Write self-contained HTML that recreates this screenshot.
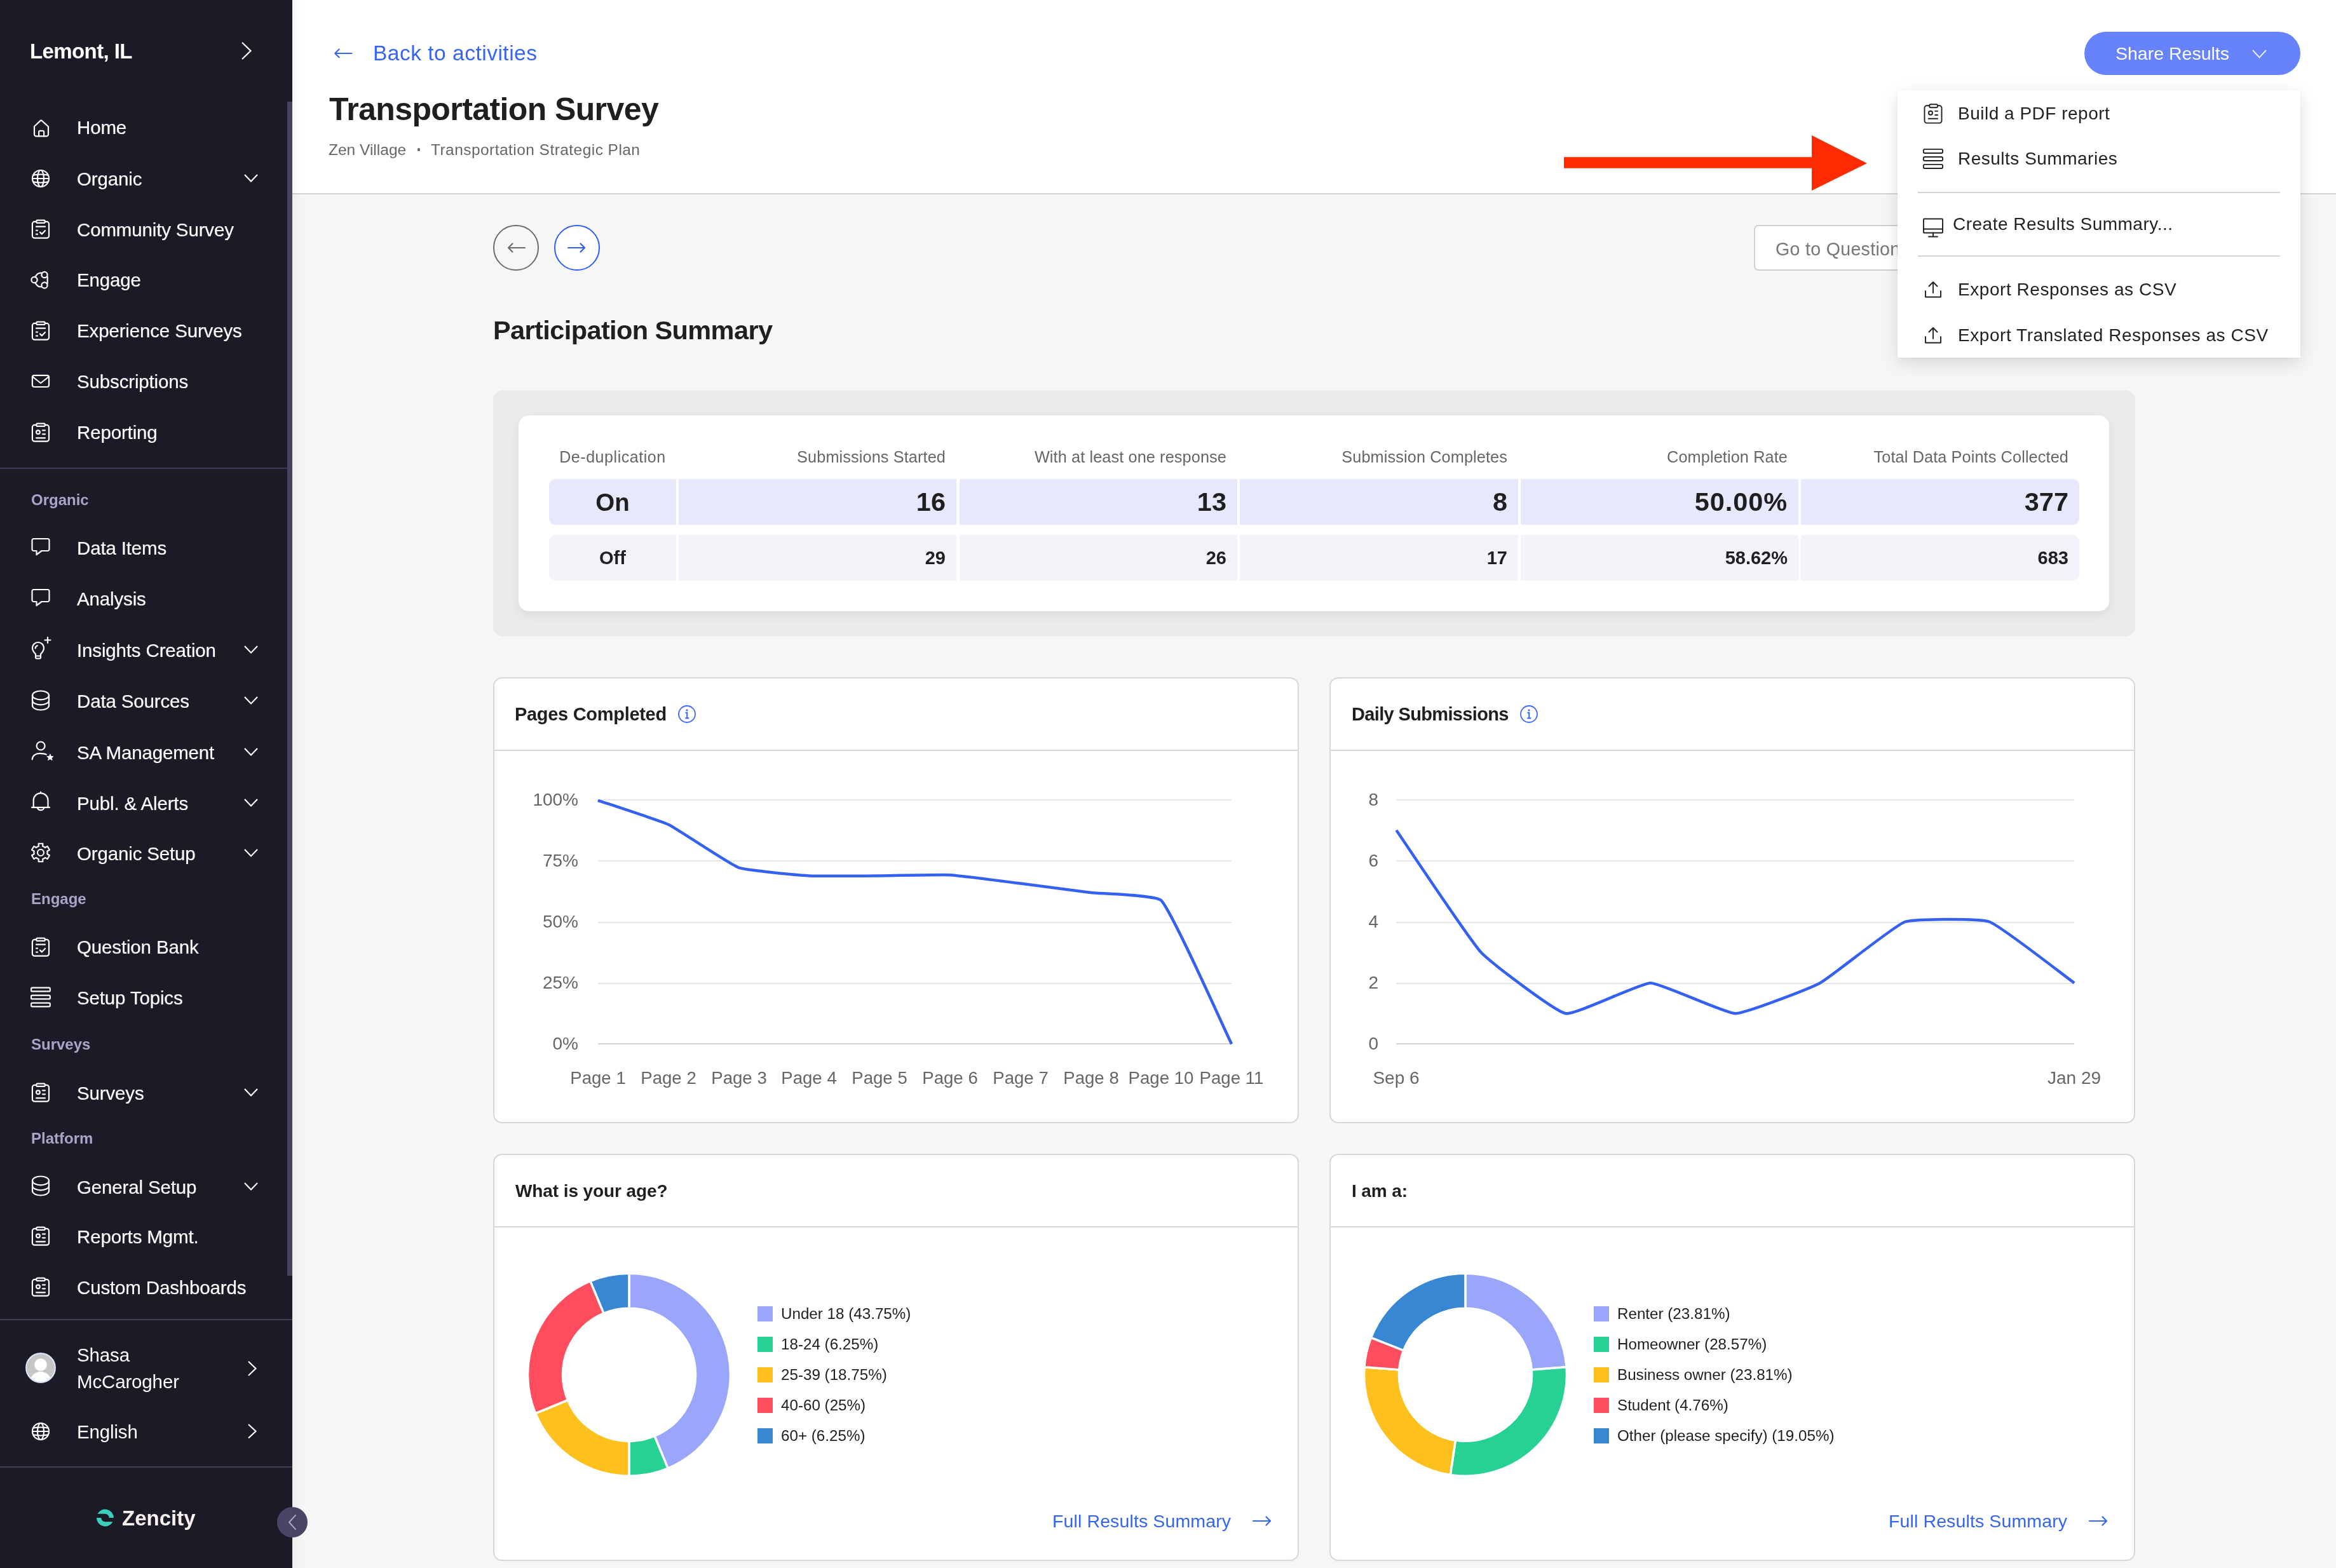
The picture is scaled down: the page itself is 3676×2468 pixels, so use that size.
<!DOCTYPE html><html><head><meta charset="utf-8"><style>
html,body{margin:0;padding:0;}
body{width:3676px;height:2468px;overflow:hidden;position:relative;background:#f6f6f6;font-family:'Liberation Sans',sans-serif;}
.t{position:absolute;white-space:nowrap;font-family:'Liberation Sans',sans-serif;will-change:transform;}
</style></head><body>
<div style="position:absolute;left:0.0px;top:0.0px;width:460.0px;height:2468.0px;background:#1b1a27;"></div>
<div style="position:absolute;left:452.0px;top:160.0px;width:8.0px;height:1848.0px;background:#47425f;"></div>
<div style="position:absolute;left:0.0px;top:735.5px;width:452.0px;height:2.5px;background:#3e3a57;"></div>
<div style="position:absolute;left:0.0px;top:2075.5px;width:460.0px;height:2.5px;background:#3e3a57;"></div>
<div style="position:absolute;left:0.0px;top:2307.5px;width:460.0px;height:2.5px;background:#3e3a57;"></div>
<div class="t" style="left:47.3px;top:63.9px;font-size:33px;line-height:33px;font-weight:700;color:#fff;letter-spacing:-0.6px;">Lemont, IL</div>
<svg style="position:absolute;left:378.2px;top:64.0px;overflow:visible" width="19.5" height="32" viewBox="0 0 19.5 32"><polyline points="3,3 16.5,16.0 3,29" fill="none" stroke="#ffffff" stroke-width="2.2" stroke-linecap="butt" stroke-linejoin="miter"/></svg>
<svg style="position:absolute;left:48.0px;top:184.5px;overflow:visible" width="32" height="32" viewBox="0 0 32 32"><path d="M6 14 L15.4 5.1 Q16.7 3.9 18 5.1 L28 14.2 V26.4 A3 3 0 0 1 25 29.4 H9 A3 3 0 0 1 6 26.4 Z" fill="none" stroke="#fff" stroke-width="2.2" stroke-linecap="round" stroke-linejoin="round"/><path d="M13.1 29.4 V22.6 A1.8 1.8 0 0 1 14.9 20.8 H19.3 A1.8 1.8 0 0 1 21.1 22.6 V29.4" fill="none" stroke="#fff" stroke-width="2.2" stroke-linecap="round" stroke-linejoin="round"/></svg>
<div class="t" style="left:121.0px;top:186.2px;font-size:29.5px;line-height:29.5px;font-weight:400;color:#fff;letter-spacing:-0.15px;-webkit-text-stroke:0.2px #fff;">Home</div>
<svg style="position:absolute;left:48.0px;top:265.0px;overflow:visible" width="32" height="32" viewBox="0 0 32 32"><circle cx="16" cy="16" r="13" fill="none" stroke="#fff" stroke-width="2.2" stroke-linecap="round" stroke-linejoin="round"/><ellipse cx="16" cy="16" rx="5" ry="13" fill="none" stroke="#fff" stroke-width="2.2" stroke-linecap="round" stroke-linejoin="round"/><path d="M3 16 H29 M4.6 10.6 Q16 8.4 27.4 10.6 M4.6 21.4 Q16 23.6 27.4 21.4" fill="none" stroke="#fff" stroke-width="2.2" stroke-linecap="round" stroke-linejoin="round"/></svg>
<div class="t" style="left:121.0px;top:266.7px;font-size:29.5px;line-height:29.5px;font-weight:400;color:#fff;letter-spacing:-0.15px;-webkit-text-stroke:0.2px #fff;">Organic</div>
<svg style="position:absolute;left:382.2px;top:271.9px;overflow:visible" width="26" height="16.5" viewBox="0 0 26 16.5"><polyline points="3,3 13.0,13.5 23,3" fill="none" stroke="#ffffff" stroke-width="2.2" stroke-linecap="butt" stroke-linejoin="miter"/></svg>
<svg style="position:absolute;left:48.0px;top:345.3px;overflow:visible" width="32" height="32" viewBox="0 0 32 32"><rect x="2.9" y="3.9" width="26.1" height="25.8" rx="3.5" fill="none" stroke="#fff" stroke-width="2.2" stroke-linecap="round" stroke-linejoin="round"/><rect x="9.2" y="1.6" width="13.6" height="4.3" rx="2" fill="#1b1a27" stroke="#fff" stroke-width="2.2"/><path d="M9 11.7 H23 M9 17.7 H11 M9 23.7 H11 M15 20.6 L17.8 23.4 L23 18" fill="none" stroke="#fff" stroke-width="2.2" stroke-linecap="round" stroke-linejoin="round"/></svg>
<div class="t" style="left:121.0px;top:347.0px;font-size:29.5px;line-height:29.5px;font-weight:400;color:#fff;letter-spacing:-0.15px;-webkit-text-stroke:0.2px #fff;">Community Survey</div>
<svg style="position:absolute;left:48.0px;top:424.5px;overflow:visible" width="32" height="32" viewBox="0 0 32 32"><circle cx="6" cy="15.5" r="4.6" fill="none" stroke="#fff" stroke-width="2.2" stroke-linecap="round" stroke-linejoin="round"/><circle cx="22" cy="7.5" r="4.6" fill="none" stroke="#fff" stroke-width="2.2" stroke-linecap="round" stroke-linejoin="round"/><circle cx="22" cy="24" r="4.6" fill="none" stroke="#fff" stroke-width="2.2" stroke-linecap="round" stroke-linejoin="round"/><path d="M7.5 11.2 C9.5 6.5 13 4 17.6 4.6 M7.5 19.8 C9.5 24.5 13 27 17.6 26.4 M26.7 10.5 V21" fill="none" stroke="#fff" stroke-width="2.2" stroke-linecap="round" stroke-linejoin="round"/></svg>
<div class="t" style="left:121.0px;top:426.2px;font-size:29.5px;line-height:29.5px;font-weight:400;color:#fff;letter-spacing:-0.15px;-webkit-text-stroke:0.2px #fff;">Engage</div>
<svg style="position:absolute;left:48.0px;top:504.5px;overflow:visible" width="32" height="32" viewBox="0 0 32 32"><rect x="2.9" y="3.9" width="26.1" height="25.8" rx="3.5" fill="none" stroke="#fff" stroke-width="2.2" stroke-linecap="round" stroke-linejoin="round"/><rect x="9.2" y="1.6" width="13.6" height="4.3" rx="2" fill="#1b1a27" stroke="#fff" stroke-width="2.2"/><path d="M9 11.7 H23 M9 17.7 H11 M9 23.7 H11 M15 20.6 L17.8 23.4 L23 18" fill="none" stroke="#fff" stroke-width="2.2" stroke-linecap="round" stroke-linejoin="round"/></svg>
<div class="t" style="left:121.0px;top:506.2px;font-size:29.5px;line-height:29.5px;font-weight:400;color:#fff;letter-spacing:-0.15px;-webkit-text-stroke:0.2px #fff;">Experience Surveys</div>
<svg style="position:absolute;left:48.0px;top:584.2px;overflow:visible" width="32" height="32" viewBox="0 0 32 32"><rect x="2.9" y="6.8" width="26.1" height="18.2" rx="3" fill="none" stroke="#fff" stroke-width="2.2" stroke-linecap="round" stroke-linejoin="round"/><path d="M4 9.5 L16 19 L28 9.5" fill="none" stroke="#fff" stroke-width="2.2" stroke-linecap="round" stroke-linejoin="round"/></svg>
<div class="t" style="left:121.0px;top:585.9px;font-size:29.5px;line-height:29.5px;font-weight:400;color:#fff;letter-spacing:-0.15px;-webkit-text-stroke:0.2px #fff;">Subscriptions</div>
<svg style="position:absolute;left:48.0px;top:664.5px;overflow:visible" width="32" height="32" viewBox="0 0 32 32"><rect x="2.9" y="3.9" width="26.1" height="25.8" rx="3.5" fill="none" stroke="#fff" stroke-width="2.2" stroke-linecap="round" stroke-linejoin="round"/><rect x="9.2" y="1.6" width="13.6" height="4.3" rx="2" fill="#1b1a27" stroke="#fff" stroke-width="2.2"/><circle cx="11.9" cy="15.2" r="2.9" fill="none" stroke="#fff" stroke-width="2.2" stroke-linecap="round" stroke-linejoin="round"/><path d="M18.9 12.3 H23 M18.9 18.3 H23 M9 24.3 H23" fill="none" stroke="#fff" stroke-width="2.2" stroke-linecap="round" stroke-linejoin="round"/></svg>
<div class="t" style="left:121.0px;top:666.2px;font-size:29.5px;line-height:29.5px;font-weight:400;color:#fff;letter-spacing:-0.15px;-webkit-text-stroke:0.2px #fff;">Reporting</div>
<svg style="position:absolute;left:48.0px;top:846.3px;overflow:visible" width="32" height="32" viewBox="0 0 32 32"><path d="M5 2 H27 A2.5 2.5 0 0 1 29.5 4.5 V18.5 A2.5 2.5 0 0 1 27 21 H17.5 L9.5 27 V21 H5 A2.5 2.5 0 0 1 2.5 18.5 V4.5 A2.5 2.5 0 0 1 5 2 Z" fill="none" stroke="#fff" stroke-width="2.2" stroke-linecap="round" stroke-linejoin="round"/></svg>
<div class="t" style="left:121.0px;top:848.0px;font-size:29.5px;line-height:29.5px;font-weight:400;color:#fff;letter-spacing:-0.15px;-webkit-text-stroke:0.2px #fff;">Data Items</div>
<svg style="position:absolute;left:48.0px;top:925.8px;overflow:visible" width="32" height="32" viewBox="0 0 32 32"><path d="M5 2 H27 A2.5 2.5 0 0 1 29.5 4.5 V18.5 A2.5 2.5 0 0 1 27 21 H17.5 L9.5 27 V21 H5 A2.5 2.5 0 0 1 2.5 18.5 V4.5 A2.5 2.5 0 0 1 5 2 Z" fill="none" stroke="#fff" stroke-width="2.2" stroke-linecap="round" stroke-linejoin="round"/></svg>
<div class="t" style="left:121.0px;top:927.5px;font-size:29.5px;line-height:29.5px;font-weight:400;color:#fff;letter-spacing:-0.15px;-webkit-text-stroke:0.2px #fff;">Analysis</div>
<svg style="position:absolute;left:48.0px;top:1007.5px;overflow:visible" width="32" height="32" viewBox="0 0 32 32"><path d="M8 21.5 C5.5 19 3 16.5 3 12 A9 9 0 0 1 21 12 C21 16.5 18.5 19 16 21.5 V26.5 A2 2 0 0 1 14 28.5 H10 A2 2 0 0 1 8 26.5 Z M8 24.5 H16" fill="none" stroke="#fff" stroke-width="2.2" stroke-linecap="round" stroke-linejoin="round"/><path d="M7.6 12.5 A4.6 4.6 0 0 1 10.8 8.2" fill="none" stroke="#fff" stroke-width="2.2" stroke-linecap="round" stroke-linejoin="round"/><path d="M27 -5 V4 M22.5 -0.5 H31.5" fill="none" stroke="#fff" stroke-width="2.2" stroke-linecap="round" stroke-linejoin="round"/></svg>
<div class="t" style="left:121.0px;top:1009.2px;font-size:29.5px;line-height:29.5px;font-weight:400;color:#fff;letter-spacing:-0.15px;-webkit-text-stroke:0.2px #fff;">Insights Creation</div>
<svg style="position:absolute;left:382.2px;top:1014.4px;overflow:visible" width="26" height="16.5" viewBox="0 0 26 16.5"><polyline points="3,3 13.0,13.5 23,3" fill="none" stroke="#ffffff" stroke-width="2.2" stroke-linecap="butt" stroke-linejoin="miter"/></svg>
<svg style="position:absolute;left:48.0px;top:1087.5px;overflow:visible" width="32" height="32" viewBox="0 0 32 32"><ellipse cx="16" cy="6.4" rx="13" ry="6.9" fill="none" stroke="#fff" stroke-width="2.2" stroke-linecap="round" stroke-linejoin="round"/><path d="M3 6.4 V22.6 A13 6.9 0 0 0 29 22.6 V6.4 M3 14.4 A13 6.9 0 0 0 29 14.4" fill="none" stroke="#fff" stroke-width="2.2" stroke-linecap="round" stroke-linejoin="round"/></svg>
<div class="t" style="left:121.0px;top:1089.2px;font-size:29.5px;line-height:29.5px;font-weight:400;color:#fff;letter-spacing:-0.15px;-webkit-text-stroke:0.2px #fff;">Data Sources</div>
<svg style="position:absolute;left:382.2px;top:1094.4px;overflow:visible" width="26" height="16.5" viewBox="0 0 26 16.5"><polyline points="3,3 13.0,13.5 23,3" fill="none" stroke="#ffffff" stroke-width="2.2" stroke-linecap="butt" stroke-linejoin="miter"/></svg>
<svg style="position:absolute;left:48.0px;top:1168.1px;overflow:visible" width="32" height="32" viewBox="0 0 32 32"><circle cx="16.1" cy="6" r="6.5" fill="none" stroke="#fff" stroke-width="2.2" stroke-linecap="round" stroke-linejoin="round"/><path d="M2.7 27.4 C3 21.5 8 17.8 14.5 17.8 C19 17.8 22.5 18.3 24.8 19.6" fill="none" stroke="#fff" stroke-width="2.2" stroke-linecap="round" stroke-linejoin="round"/><path d="M30.9 18.8 L32.4 22.3 L36 22.6 L33.3 25 L34.1 28.6 L30.9 26.7 L27.7 28.6 L28.5 25 L25.8 22.6 L29.4 22.3 Z" fill="#fff" stroke="#fff" stroke-width="0.8" stroke-linejoin="round"/></svg>
<div class="t" style="left:121.0px;top:1169.8px;font-size:29.5px;line-height:29.5px;font-weight:400;color:#fff;letter-spacing:-0.15px;-webkit-text-stroke:0.2px #fff;">SA Management</div>
<svg style="position:absolute;left:382.2px;top:1175.0px;overflow:visible" width="26" height="16.5" viewBox="0 0 26 16.5"><polyline points="3,3 13.0,13.5 23,3" fill="none" stroke="#ffffff" stroke-width="2.2" stroke-linecap="butt" stroke-linejoin="miter"/></svg>
<svg style="position:absolute;left:48.0px;top:1248.2px;overflow:visible" width="32" height="32" viewBox="0 0 32 32"><path d="M4.7 22.8 V11.7 A11.4 11.4 0 0 1 27.5 11.7 V22.8 M2 22.8 H30 M16 -1.5 V0.5 M10.9 22.8 A5.2 4.4 0 0 0 21.3 22.8" fill="none" stroke="#fff" stroke-width="2.2" stroke-linecap="round" stroke-linejoin="round"/></svg>
<div class="t" style="left:121.0px;top:1249.9px;font-size:29.5px;line-height:29.5px;font-weight:400;color:#fff;letter-spacing:-0.15px;-webkit-text-stroke:0.2px #fff;">Publ. &amp; Alerts</div>
<svg style="position:absolute;left:382.2px;top:1255.1px;overflow:visible" width="26" height="16.5" viewBox="0 0 26 16.5"><polyline points="3,3 13.0,13.5 23,3" fill="none" stroke="#ffffff" stroke-width="2.2" stroke-linecap="butt" stroke-linejoin="miter"/></svg>
<svg style="position:absolute;left:48.0px;top:1327.2px;overflow:visible" width="32" height="32" viewBox="0 0 32 32"><polygon points="8.91,7.12 10.07,6.21 11.35,5.47 12.72,4.92 12.72,4.92 12.72,0.77 19.28,0.77 19.28,4.92 19.28,4.92 20.65,5.47 21.93,6.21 23.09,7.12 23.09,7.12 26.68,5.04 29.96,10.73 26.37,12.80 26.37,12.80 26.57,14.26 26.57,15.74 26.37,17.20 26.37,17.20 29.96,19.27 26.68,24.96 23.09,22.88 23.09,22.88 21.93,23.79 20.65,24.53 19.28,25.08 19.28,25.08 19.28,29.23 12.72,29.23 12.72,25.08 12.72,25.08 11.35,24.53 10.07,23.79 8.91,22.88 8.91,22.88 5.32,24.96 2.04,19.27 5.63,17.20 5.63,17.20 5.43,15.74 5.43,14.26 5.63,12.80 5.63,12.80 2.04,10.73 5.32,5.04 8.91,7.12" fill="none" stroke="#fff" stroke-width="2.2" stroke-linecap="round" stroke-linejoin="round" stroke-miterlimit="2"/><circle cx="16" cy="15" r="5" fill="none" stroke="#fff" stroke-width="2.2" stroke-linecap="round" stroke-linejoin="round"/></svg>
<div class="t" style="left:121.0px;top:1328.9px;font-size:29.5px;line-height:29.5px;font-weight:400;color:#fff;letter-spacing:-0.15px;-webkit-text-stroke:0.2px #fff;">Organic Setup</div>
<svg style="position:absolute;left:382.2px;top:1334.1px;overflow:visible" width="26" height="16.5" viewBox="0 0 26 16.5"><polyline points="3,3 13.0,13.5 23,3" fill="none" stroke="#ffffff" stroke-width="2.2" stroke-linecap="butt" stroke-linejoin="miter"/></svg>
<svg style="position:absolute;left:48.0px;top:1474.5px;overflow:visible" width="32" height="32" viewBox="0 0 32 32"><rect x="2.9" y="3.9" width="26.1" height="25.8" rx="3.5" fill="none" stroke="#fff" stroke-width="2.2" stroke-linecap="round" stroke-linejoin="round"/><rect x="9.2" y="1.6" width="13.6" height="4.3" rx="2" fill="#1b1a27" stroke="#fff" stroke-width="2.2"/><path d="M9 11.7 H23 M9 17.7 H11 M9 23.7 H11 M15 20.6 L17.8 23.4 L23 18" fill="none" stroke="#fff" stroke-width="2.2" stroke-linecap="round" stroke-linejoin="round"/></svg>
<div class="t" style="left:121.0px;top:1476.2px;font-size:29.5px;line-height:29.5px;font-weight:400;color:#fff;letter-spacing:-0.15px;-webkit-text-stroke:0.2px #fff;">Question Bank</div>
<svg style="position:absolute;left:48.0px;top:1554.4px;overflow:visible" width="32" height="32" viewBox="0 0 32 32"><rect x="1.05" y="0.65" width="29.8" height="5.8" rx="1.8" fill="none" stroke="#fff" stroke-width="2.2" stroke-linecap="round" stroke-linejoin="round"/><rect x="1.05" y="12.65" width="29.8" height="5.8" rx="1.8" fill="none" stroke="#fff" stroke-width="2.2" stroke-linecap="round" stroke-linejoin="round"/><rect x="1.05" y="24.55" width="29.8" height="5.8" rx="1.8" fill="none" stroke="#fff" stroke-width="2.2" stroke-linecap="round" stroke-linejoin="round"/></svg>
<div class="t" style="left:121.0px;top:1556.1px;font-size:29.5px;line-height:29.5px;font-weight:400;color:#fff;letter-spacing:-0.15px;-webkit-text-stroke:0.2px #fff;">Setup Topics</div>
<svg style="position:absolute;left:48.0px;top:1703.9px;overflow:visible" width="32" height="32" viewBox="0 0 32 32"><rect x="2.9" y="3.9" width="26.1" height="25.8" rx="3.5" fill="none" stroke="#fff" stroke-width="2.2" stroke-linecap="round" stroke-linejoin="round"/><rect x="9.2" y="1.6" width="13.6" height="4.3" rx="2" fill="#1b1a27" stroke="#fff" stroke-width="2.2"/><circle cx="11.9" cy="15.2" r="2.9" fill="none" stroke="#fff" stroke-width="2.2" stroke-linecap="round" stroke-linejoin="round"/><path d="M18.9 12.3 H23 M18.9 18.3 H23 M9 24.3 H23" fill="none" stroke="#fff" stroke-width="2.2" stroke-linecap="round" stroke-linejoin="round"/></svg>
<div class="t" style="left:121.0px;top:1705.6px;font-size:29.5px;line-height:29.5px;font-weight:400;color:#fff;letter-spacing:-0.15px;-webkit-text-stroke:0.2px #fff;">Surveys</div>
<svg style="position:absolute;left:382.2px;top:1710.8px;overflow:visible" width="26" height="16.5" viewBox="0 0 26 16.5"><polyline points="3,3 13.0,13.5 23,3" fill="none" stroke="#ffffff" stroke-width="2.2" stroke-linecap="butt" stroke-linejoin="miter"/></svg>
<svg style="position:absolute;left:48.0px;top:1851.8px;overflow:visible" width="32" height="32" viewBox="0 0 32 32"><ellipse cx="16" cy="6.4" rx="13" ry="6.9" fill="none" stroke="#fff" stroke-width="2.2" stroke-linecap="round" stroke-linejoin="round"/><path d="M3 6.4 V22.6 A13 6.9 0 0 0 29 22.6 V6.4 M3 14.4 A13 6.9 0 0 0 29 14.4" fill="none" stroke="#fff" stroke-width="2.2" stroke-linecap="round" stroke-linejoin="round"/></svg>
<div class="t" style="left:121.0px;top:1853.5px;font-size:29.5px;line-height:29.5px;font-weight:400;color:#fff;letter-spacing:-0.15px;-webkit-text-stroke:0.2px #fff;">General Setup</div>
<svg style="position:absolute;left:382.2px;top:1858.7px;overflow:visible" width="26" height="16.5" viewBox="0 0 26 16.5"><polyline points="3,3 13.0,13.5 23,3" fill="none" stroke="#ffffff" stroke-width="2.2" stroke-linecap="butt" stroke-linejoin="miter"/></svg>
<svg style="position:absolute;left:48.0px;top:1930.4px;overflow:visible" width="32" height="32" viewBox="0 0 32 32"><rect x="2.9" y="3.9" width="26.1" height="25.8" rx="3.5" fill="none" stroke="#fff" stroke-width="2.2" stroke-linecap="round" stroke-linejoin="round"/><rect x="9.2" y="1.6" width="13.6" height="4.3" rx="2" fill="#1b1a27" stroke="#fff" stroke-width="2.2"/><circle cx="11.9" cy="15.2" r="2.9" fill="none" stroke="#fff" stroke-width="2.2" stroke-linecap="round" stroke-linejoin="round"/><path d="M18.9 12.3 H23 M18.9 18.3 H23 M9 24.3 H23" fill="none" stroke="#fff" stroke-width="2.2" stroke-linecap="round" stroke-linejoin="round"/></svg>
<div class="t" style="left:121.0px;top:1932.1px;font-size:29.5px;line-height:29.5px;font-weight:400;color:#fff;letter-spacing:-0.15px;-webkit-text-stroke:0.2px #fff;">Reports Mgmt.</div>
<svg style="position:absolute;left:48.0px;top:2010.3px;overflow:visible" width="32" height="32" viewBox="0 0 32 32"><rect x="2.9" y="3.9" width="26.1" height="25.8" rx="3.5" fill="none" stroke="#fff" stroke-width="2.2" stroke-linecap="round" stroke-linejoin="round"/><rect x="9.2" y="1.6" width="13.6" height="4.3" rx="2" fill="#1b1a27" stroke="#fff" stroke-width="2.2"/><circle cx="11.9" cy="15.2" r="2.9" fill="none" stroke="#fff" stroke-width="2.2" stroke-linecap="round" stroke-linejoin="round"/><path d="M18.9 12.3 H23 M18.9 18.3 H23 M9 24.3 H23" fill="none" stroke="#fff" stroke-width="2.2" stroke-linecap="round" stroke-linejoin="round"/></svg>
<div class="t" style="left:121.0px;top:2012.0px;font-size:29.5px;line-height:29.5px;font-weight:400;color:#fff;letter-spacing:-0.15px;-webkit-text-stroke:0.2px #fff;">Custom Dashboards</div>
<div class="t" style="left:48.7px;top:775.4px;font-size:24px;line-height:24px;font-weight:700;color:#a9a5c9;">Organic</div>
<div class="t" style="left:48.7px;top:1403.4px;font-size:24px;line-height:24px;font-weight:700;color:#a9a5c9;">Engage</div>
<div class="t" style="left:48.7px;top:1631.7px;font-size:24px;line-height:24px;font-weight:700;color:#a9a5c9;">Surveys</div>
<div class="t" style="left:48.7px;top:1779.8px;font-size:24px;line-height:24px;font-weight:700;color:#a9a5c9;">Platform</div>
<svg style="position:absolute;left:40.0px;top:2129.0px;" width="48" height="48" viewBox="0 0 48 48"><defs><clipPath id="av"><circle cx="24" cy="24" r="23"/></clipPath></defs><circle cx="24" cy="24" r="23" fill="#c6c6c6"/><g clip-path="url(#av)"><circle cx="24" cy="19.1" r="9.8" fill="#fff"/><ellipse cx="24" cy="47" rx="17" ry="17" fill="#fff"/></g><circle cx="24" cy="24" r="22.8" fill="none" stroke="#dce3fb" stroke-width="2.2"/></svg>
<div class="t" style="left:121.0px;top:2117.8px;font-size:29.5px;line-height:29.5px;font-weight:400;color:#fff;letter-spacing:-0.15px;">Shasa</div>
<div class="t" style="left:121.0px;top:2159.8px;font-size:29.5px;line-height:29.5px;font-weight:400;color:#fff;letter-spacing:-0.15px;">McCarogher</div>
<svg style="position:absolute;left:387.5px;top:2140.0px;overflow:visible" width="17.5" height="28" viewBox="0 0 17.5 28"><polyline points="3,3 14.5,14.0 3,25" fill="none" stroke="#ffffff" stroke-width="2.2" stroke-linecap="butt" stroke-linejoin="miter"/></svg>
<svg style="position:absolute;left:48.0px;top:2236.5px;overflow:visible" width="32" height="32" viewBox="0 0 32 32"><circle cx="16" cy="16" r="13" fill="none" stroke="#fff" stroke-width="2.2" stroke-linecap="round" stroke-linejoin="round"/><ellipse cx="16" cy="16" rx="5" ry="13" fill="none" stroke="#fff" stroke-width="2.2" stroke-linecap="round" stroke-linejoin="round"/><path d="M3 16 H29 M4.6 10.6 Q16 8.4 27.4 10.6 M4.6 21.4 Q16 23.6 27.4 21.4" fill="none" stroke="#fff" stroke-width="2.2" stroke-linecap="round" stroke-linejoin="round"/></svg>
<div class="t" style="left:121.0px;top:2238.5px;font-size:29.5px;line-height:29.5px;font-weight:400;color:#fff;letter-spacing:-0.15px;">English</div>
<svg style="position:absolute;left:387.5px;top:2239.0px;overflow:visible" width="17.5" height="27.5" viewBox="0 0 17.5 27.5"><polyline points="3,3 14.5,13.75 3,24.5" fill="none" stroke="#ffffff" stroke-width="2.2" stroke-linecap="butt" stroke-linejoin="miter"/></svg>
<svg style="position:absolute;left:0.0px;top:2300.0px;" width="460" height="168" viewBox="0 0 460 168"><g transform="translate(0,-2300)"><path d="M178.90,2389.00 A13.5,13.5 0 0 0 153.41,2382.80 L165.40,2382.80 A6.2,6.2 0 0 1 171.60,2389.00 Z" fill="#3ccfbd"/><path d="M151.90,2389.00 A13.5,13.5 0 0 0 177.39,2395.20 L165.40,2395.20 A6.2,6.2 0 0 1 159.20,2389.00 Z" fill="#3ccfbd"/></g></svg>
<div class="t" style="left:192.0px;top:2373.1px;font-size:33px;line-height:33px;font-weight:700;color:#f8f1ee;">Zencity</div>
<svg style="position:absolute;left:436.0px;top:2372.0px;" width="48" height="48" viewBox="0 0 48 48"><circle cx="24" cy="24" r="24" fill="#4a4566"/><polyline points="29,13 19,24 29,35" fill="none" stroke="#aaa5c6" stroke-width="2" stroke-linecap="round" stroke-linejoin="round"/></svg>
<div style="position:absolute;left:460.0px;top:0.0px;width:3216.0px;height:304.0px;background:#fff;"></div>
<div style="position:absolute;left:460.0px;top:304.0px;width:3216.0px;height:2.0px;background:#d4d4d4;"></div>
<div style="position:absolute;left:460.0px;top:0.0px;width:20.0px;height:2468.0px;background:linear-gradient(to right, rgba(0,0,0,0.04), rgba(0,0,0,0.012) 50%, rgba(0,0,0,0));"></div>
<svg style="position:absolute;left:522.0px;top:72.0px;" width="36" height="24" viewBox="0 0 36 24"><path d="M5.2 12 H31.6 M11.6 5.6 L5.2 12 L11.6 18.2" fill="none" stroke="#3465f4" stroke-width="2.1" stroke-linecap="round" stroke-linejoin="round"/></svg>
<div class="t" style="left:587.0px;top:67.2px;font-size:33.5px;line-height:33.5px;font-weight:400;color:#3465f4;letter-spacing:0.5px;">Back to activities</div>
<div class="t" style="left:517.5px;top:147.4px;font-size:50px;line-height:50px;font-weight:700;color:#1f1f1f;letter-spacing:-0.6px;">Transportation Survey</div>
<div class="t" style="left:517.0px;top:223.6px;font-size:24.5px;line-height:24.5px;font-weight:400;color:#666;">Zen Village</div>
<div style="position:absolute;left:656.5px;top:233.0px;width:4.5px;height:4.5px;background:#666;border-radius:50%;"></div>
<div class="t" style="left:677.9px;top:223.6px;font-size:24.5px;line-height:24.5px;font-weight:400;color:#666;letter-spacing:0.45px;">Transportation Strategic Plan</div>
<div style="position:absolute;left:3280.0px;top:49.7px;width:339.8px;height:68.2px;background:#6683fb;border-radius:34px;"></div>
<div class="t" style="left:3328.6px;top:70.2px;font-size:28.5px;line-height:28.5px;font-weight:400;color:#fff;">Share Results</div>
<svg style="position:absolute;left:3542.0px;top:75.5px;overflow:visible" width="27" height="17.5" viewBox="0 0 27 17.5"><polyline points="3,3 13.5,14.5 24,3" fill="none" stroke="#ececf2" stroke-width="1.9" stroke-linecap="butt" stroke-linejoin="miter"/></svg>
<svg style="position:absolute;left:2455.0px;top:205.0px;" width="490" height="100" viewBox="0 0 490 100"><polygon points="6,42.3 396,42.3 396,8 483,52 396,95 396,59.8 6,59.8" fill="#ff2a00"/></svg>
<div style="position:absolute;left:776.2px;top:354.2px;width:71.4px;height:71.4px;box-sizing:border-box;border:2.2px solid #6b6b6b;border-radius:50%;"></div>
<div style="position:absolute;left:872.3px;top:354.2px;width:71.4px;height:71.4px;box-sizing:border-box;border:2.4px solid #2f5cf5;border-radius:50%;background:#fff;"></div>
<svg style="position:absolute;left:796.0px;top:378.0px;" width="32" height="24" viewBox="0 0 32 24"><path d="M4 12 H30 M10.5 5.5 L4 12 L10.5 18.5" fill="none" stroke="#6b6b6b" stroke-width="2.2" stroke-linecap="round" stroke-linejoin="round"/></svg>
<svg style="position:absolute;left:892.0px;top:378.0px;" width="32" height="24" viewBox="0 0 32 24"><path d="M2 12 H28 M21.5 5.5 L28 12 L21.5 18.5" fill="none" stroke="#2f5cf5" stroke-width="2.2" stroke-linecap="round" stroke-linejoin="round"/></svg>
<div style="position:absolute;left:2760.4px;top:354.0px;width:439.6px;height:71.7px;box-sizing:border-box;border:2px solid #cfcfcf;border-radius:7px;background:#fff;"></div>
<div class="t" style="left:2793.8px;top:377.5px;font-size:28.6px;line-height:28.6px;font-weight:400;color:#777;letter-spacing:0.3px;">Go to Question</div>
<div class="t" style="left:776.0px;top:499.1px;font-size:41.5px;line-height:41.5px;font-weight:700;color:#1f1f1f;letter-spacing:-0.6px;">Participation Summary</div>
<div style="position:absolute;left:776.4px;top:614.0px;width:2583.2px;height:387.5px;background:#ebebeb;border-radius:16px;"></div>
<div style="position:absolute;left:816.0px;top:653.5px;width:2503.1px;height:308.5px;background:#fff;border-radius:16px;box-shadow:0 6px 18px rgba(0,0,0,0.07);"></div>
<div style="position:absolute;left:864.2px;top:754.0px;width:199.6px;height:71.8px;background:#e7e8fc;border-radius:10px 0 0 10px;"></div>
<div style="position:absolute;left:864.2px;top:842.0px;width:199.6px;height:71.5px;background:#f3f4fa;border-radius:10px 0 0 10px;"></div>
<div class="t" style="left:-536.0px;width:3000px;text-align:center;top:707.3px;font-size:25px;line-height:25px;font-weight:400;color:#666;letter-spacing:0.55px;">De-duplication</div>
<div class="t" style="left:-536.0px;width:3000px;text-align:center;top:771.7px;font-size:38.5px;line-height:38.5px;font-weight:700;color:#1f1f1f;">On</div>
<div class="t" style="left:-536.0px;width:3000px;text-align:center;top:863.9px;font-size:29px;line-height:29px;font-weight:700;color:#1f1f1f;">Off</div>
<div style="position:absolute;left:1068.2px;top:754.0px;width:437.2px;height:71.8px;background:#e7e8fc;"></div>
<div style="position:absolute;left:1068.2px;top:842.0px;width:437.2px;height:71.5px;background:#f3f4fa;"></div>
<div class="t" style="left:-1511.6px;width:3000px;text-align:right;top:707.0px;font-size:25.3px;line-height:25.3px;font-weight:400;color:#666;letter-spacing:0.1px;">Submissions Started</div>
<div class="t" style="left:-1511.6px;width:3000px;text-align:right;top:769.1px;font-size:41.5px;line-height:41.5px;font-weight:700;color:#1f1f1f;">16</div>
<div class="t" style="left:-1511.6px;width:3000px;text-align:right;top:863.9px;font-size:29px;line-height:29px;font-weight:700;color:#1f1f1f;">29</div>
<div style="position:absolute;left:1510.0px;top:754.0px;width:436.6px;height:71.8px;background:#e7e8fc;"></div>
<div style="position:absolute;left:1510.0px;top:842.0px;width:436.6px;height:71.5px;background:#f3f4fa;"></div>
<div class="t" style="left:-1070.4px;width:3000px;text-align:right;top:707.0px;font-size:25.3px;line-height:25.3px;font-weight:400;color:#666;letter-spacing:0.1px;">With at least one response</div>
<div class="t" style="left:-1070.4px;width:3000px;text-align:right;top:769.1px;font-size:41.5px;line-height:41.5px;font-weight:700;color:#1f1f1f;">13</div>
<div class="t" style="left:-1070.4px;width:3000px;text-align:right;top:863.9px;font-size:29px;line-height:29px;font-weight:700;color:#1f1f1f;">26</div>
<div style="position:absolute;left:1951.4px;top:754.0px;width:437.3px;height:71.8px;background:#e7e8fc;"></div>
<div style="position:absolute;left:1951.4px;top:842.0px;width:437.3px;height:71.5px;background:#f3f4fa;"></div>
<div class="t" style="left:-628.3px;width:3000px;text-align:right;top:707.0px;font-size:25.3px;line-height:25.3px;font-weight:400;color:#666;letter-spacing:0.1px;">Submission Completes</div>
<div class="t" style="left:-628.3px;width:3000px;text-align:right;top:769.1px;font-size:41.5px;line-height:41.5px;font-weight:700;color:#1f1f1f;">8</div>
<div class="t" style="left:-628.3px;width:3000px;text-align:right;top:863.9px;font-size:29px;line-height:29px;font-weight:700;color:#1f1f1f;">17</div>
<div style="position:absolute;left:2393.0px;top:754.0px;width:436.8px;height:71.8px;background:#e7e8fc;"></div>
<div style="position:absolute;left:2393.0px;top:842.0px;width:436.8px;height:71.5px;background:#f3f4fa;"></div>
<div class="t" style="left:-187.2px;width:3000px;text-align:right;top:707.0px;font-size:25.3px;line-height:25.3px;font-weight:400;color:#666;letter-spacing:0.1px;">Completion Rate</div>
<div class="t" style="left:-187.2px;width:3000px;text-align:right;top:769.1px;font-size:41.5px;line-height:41.5px;font-weight:700;color:#1f1f1f;letter-spacing:0.9px;">50.00%</div>
<div class="t" style="left:-187.2px;width:3000px;text-align:right;top:863.9px;font-size:29px;line-height:29px;font-weight:700;color:#1f1f1f;">58.62%</div>
<div style="position:absolute;left:2834.3px;top:754.0px;width:437.3px;height:71.8px;background:#e7e8fc;border-radius:0 10px 10px 0;"></div>
<div style="position:absolute;left:2834.3px;top:842.0px;width:437.3px;height:71.5px;background:#f3f4fa;border-radius:0 10px 10px 0;"></div>
<div class="t" style="left:254.6px;width:3000px;text-align:right;top:707.0px;font-size:25.3px;line-height:25.3px;font-weight:400;color:#666;letter-spacing:0.1px;">Total Data Points Collected</div>
<div class="t" style="left:254.6px;width:3000px;text-align:right;top:769.1px;font-size:41.5px;line-height:41.5px;font-weight:700;color:#1f1f1f;">377</div>
<div class="t" style="left:254.6px;width:3000px;text-align:right;top:863.9px;font-size:29px;line-height:29px;font-weight:700;color:#1f1f1f;">683</div>
<div style="position:absolute;left:776.0px;top:1066.0px;width:1268.3px;height:701.5px;box-sizing:border-box;border:2px solid #d8d8d8;border-radius:14px;background:#fff;"></div>
<div style="position:absolute;left:777.0px;top:1180.0px;width:1266.3px;height:2.2px;background:#d8d8d8;"></div>
<div class="t" style="left:809.5px;top:1110.1px;font-size:29px;line-height:29px;font-weight:700;color:#1f1f1f;letter-spacing:-0.3px;">Pages Completed</div>
<svg style="position:absolute;left:1066.0px;top:1109.0px;" width="30" height="30" viewBox="0 0 30 30"><circle cx="15" cy="15" r="13" fill="none" stroke="#3f69f6" stroke-width="1.8"/><circle cx="15" cy="8.8" r="1.6" fill="#3f69f6"/><path d="M12.4 12.7 H15.2 V21.4 M12.3 21.4 H18.2" fill="none" stroke="#3f69f6" stroke-width="2.1"/></svg>
<div style="position:absolute;left:940.9px;top:1257.7px;width:997.2px;height:2.0px;background:#e6e6e6;"></div>
<div style="position:absolute;left:940.9px;top:1354.0px;width:997.2px;height:2.0px;background:#e6e6e6;"></div>
<div style="position:absolute;left:940.9px;top:1450.5px;width:997.2px;height:2.0px;background:#e6e6e6;"></div>
<div style="position:absolute;left:940.9px;top:1546.5px;width:997.2px;height:2.0px;background:#e6e6e6;"></div>
<div style="position:absolute;left:940.9px;top:1642.3px;width:997.2px;height:2.0px;background:#e6e6e6;"></div>
<div style="position:absolute;left:940.9px;top:1642.2px;width:997.2px;height:2.2px;background:#d6d6d6;"></div>
<div class="t" style="left:-2089.7px;width:3000px;text-align:right;top:1244.5px;font-size:28px;line-height:28px;font-weight:400;color:#666;">100%</div>
<div class="t" style="left:-2089.7px;width:3000px;text-align:right;top:1340.8px;font-size:28px;line-height:28px;font-weight:400;color:#666;">75%</div>
<div class="t" style="left:-2089.7px;width:3000px;text-align:right;top:1437.3px;font-size:28px;line-height:28px;font-weight:400;color:#666;">50%</div>
<div class="t" style="left:-2089.7px;width:3000px;text-align:right;top:1533.3px;font-size:28px;line-height:28px;font-weight:400;color:#666;">25%</div>
<div class="t" style="left:-2089.7px;width:3000px;text-align:right;top:1629.1px;font-size:28px;line-height:28px;font-weight:400;color:#666;">0%</div>
<div class="t" style="left:-559.1px;width:3000px;text-align:center;top:1682.8px;font-size:27.6px;line-height:27.6px;font-weight:400;color:#666;">Page 1</div>
<div class="t" style="left:-448.3px;width:3000px;text-align:center;top:1682.8px;font-size:27.6px;line-height:27.6px;font-weight:400;color:#666;">Page 2</div>
<div class="t" style="left:-337.5px;width:3000px;text-align:center;top:1682.8px;font-size:27.6px;line-height:27.6px;font-weight:400;color:#666;">Page 3</div>
<div class="t" style="left:-226.7px;width:3000px;text-align:center;top:1682.8px;font-size:27.6px;line-height:27.6px;font-weight:400;color:#666;">Page 4</div>
<div class="t" style="left:-115.9px;width:3000px;text-align:center;top:1682.8px;font-size:27.6px;line-height:27.6px;font-weight:400;color:#666;">Page 5</div>
<div class="t" style="left:-5.1px;width:3000px;text-align:center;top:1682.8px;font-size:27.6px;line-height:27.6px;font-weight:400;color:#666;">Page 6</div>
<div class="t" style="left:105.7px;width:3000px;text-align:center;top:1682.8px;font-size:27.6px;line-height:27.6px;font-weight:400;color:#666;">Page 7</div>
<div class="t" style="left:216.5px;width:3000px;text-align:center;top:1682.8px;font-size:27.6px;line-height:27.6px;font-weight:400;color:#666;">Page 8</div>
<div class="t" style="left:327.3px;width:3000px;text-align:center;top:1682.8px;font-size:27.6px;line-height:27.6px;font-weight:400;color:#666;">Page 10</div>
<div class="t" style="left:438.1px;width:3000px;text-align:center;top:1682.8px;font-size:27.6px;line-height:27.6px;font-weight:400;color:#666;">Page 11</div>
<svg style="position:absolute;left:0.0px;top:0.0px;pointer-events:none" width="3676" height="2468" viewBox="0 0 3676 2468"><path d="M940.9,1259.8 C954.2,1264.3 1039.1,1291.7 1051.7,1297.7 C1065.7,1304.4 1148.2,1360.4 1162.5,1365.6 C1174.8,1370.1 1260.0,1377.6 1273.3,1378.4 C1286.6,1379.2 1370.8,1378.5 1384.1,1378.4 C1397.4,1378.3 1481.7,1376.5 1494.9,1377.2 C1508.2,1377.9 1592.4,1388.9 1605.7,1390.6 C1619.0,1392.3 1703.2,1403.4 1716.5,1405.0 C1729.8,1406.6 1819.1,1408.5 1827.3,1417.3 C1845.7,1437.1 1924.8,1616.2 1938.1,1643.3" fill="none" stroke="#3461f2" stroke-width="4.5" stroke-linejoin="round"/></svg>
<div style="position:absolute;left:2092.0px;top:1066.0px;width:1268.3px;height:701.5px;box-sizing:border-box;border:2px solid #d8d8d8;border-radius:14px;background:#fff;"></div>
<div style="position:absolute;left:2093.0px;top:1180.0px;width:1266.3px;height:2.2px;background:#d8d8d8;"></div>
<div class="t" style="left:2127.0px;top:1110.1px;font-size:29px;line-height:29px;font-weight:700;color:#1f1f1f;letter-spacing:-0.65px;">Daily Submissions</div>
<svg style="position:absolute;left:2390.5px;top:1109.0px;" width="30" height="30" viewBox="0 0 30 30"><circle cx="15" cy="15" r="13" fill="none" stroke="#3f69f6" stroke-width="1.8"/><circle cx="15" cy="8.8" r="1.6" fill="#3f69f6"/><path d="M12.4 12.7 H15.2 V21.4 M12.3 21.4 H18.2" fill="none" stroke="#3f69f6" stroke-width="2.1"/></svg>
<div style="position:absolute;left:2197.3px;top:1257.7px;width:1066.9px;height:2.0px;background:#e6e6e6;"></div>
<div style="position:absolute;left:2197.3px;top:1354.0px;width:1066.9px;height:2.0px;background:#e6e6e6;"></div>
<div style="position:absolute;left:2197.3px;top:1450.5px;width:1066.9px;height:2.0px;background:#e6e6e6;"></div>
<div style="position:absolute;left:2197.3px;top:1546.5px;width:1066.9px;height:2.0px;background:#e6e6e6;"></div>
<div style="position:absolute;left:2197.3px;top:1642.3px;width:1066.9px;height:2.0px;background:#e6e6e6;"></div>
<div style="position:absolute;left:2197.3px;top:1642.2px;width:1066.9px;height:2.2px;background:#d6d6d6;"></div>
<div class="t" style="left:-831.0px;width:3000px;text-align:right;top:1244.5px;font-size:28px;line-height:28px;font-weight:400;color:#666;">8</div>
<div class="t" style="left:-831.0px;width:3000px;text-align:right;top:1340.8px;font-size:28px;line-height:28px;font-weight:400;color:#666;">6</div>
<div class="t" style="left:-831.0px;width:3000px;text-align:right;top:1437.3px;font-size:28px;line-height:28px;font-weight:400;color:#666;">4</div>
<div class="t" style="left:-831.0px;width:3000px;text-align:right;top:1533.3px;font-size:28px;line-height:28px;font-weight:400;color:#666;">2</div>
<div class="t" style="left:-831.0px;width:3000px;text-align:right;top:1629.1px;font-size:28px;line-height:28px;font-weight:400;color:#666;">0</div>
<div class="t" style="left:697.3px;width:3000px;text-align:center;top:1682.5px;font-size:28px;line-height:28px;font-weight:400;color:#666;">Sep 6</div>
<div class="t" style="left:1763.5px;width:3000px;text-align:center;top:1682.5px;font-size:28px;line-height:28px;font-weight:400;color:#666;">Jan 29</div>
<svg style="position:absolute;left:0.0px;top:0.0px;pointer-events:none" width="3676" height="2468" viewBox="0 0 3676 2468"><path d="M2197.3,1306.8 C2213.3,1329.9 2311.9,1478.7 2330.7,1499.1 C2343.9,1513.4 2446.8,1592.1 2464.0,1595.2 C2478.8,1597.9 2581.4,1547.2 2597.4,1547.2 C2613.4,1547.2 2714.7,1595.2 2730.8,1595.2 C2746.8,1595.2 2849.3,1555.2 2864.1,1547.2 C2881.3,1537.9 2979.8,1457.4 2997.5,1451.0 C3011.8,1445.8 3116.5,1445.8 3130.8,1451.0 C3148.5,1457.4 3248.2,1535.6 3264.2,1547.2" fill="none" stroke="#3461f2" stroke-width="4.5" stroke-linejoin="round"/></svg>
<div style="position:absolute;left:776.0px;top:1816.0px;width:1268.3px;height:640.5px;box-sizing:border-box;border:2px solid #d8d8d8;border-radius:14px;background:#fff;"></div>
<div style="position:absolute;left:777.0px;top:1929.8px;width:1266.3px;height:2.2px;background:#d8d8d8;"></div>
<div class="t" style="left:811.0px;top:1861.1px;font-size:28px;line-height:28px;font-weight:700;color:#1f1f1f;letter-spacing:-0.1px;">What is your age?</div>
<svg style="position:absolute;left:0.0px;top:0.0px;" width="3676" height="2468" viewBox="0 0 3676 2468"><path d="M990.00,2004.20 A159.5,159.5 0 0 1 1051.04,2311.06 L1029.99,2260.25 A104.5,104.5 0 0 0 990.00,2059.20 Z" fill="#9aa6fb" stroke="#fff" stroke-width="3.5" stroke-linejoin="miter"/><path d="M1051.04,2311.06 A159.5,159.5 0 0 1 990.00,2323.20 L990.00,2268.20 A104.5,104.5 0 0 0 1029.99,2260.25 Z" fill="#27d193" stroke="#fff" stroke-width="3.5" stroke-linejoin="miter"/><path d="M990.00,2323.20 A159.5,159.5 0 0 1 842.64,2224.74 L893.45,2203.69 A104.5,104.5 0 0 0 990.00,2268.20 Z" fill="#fdc01c" stroke="#fff" stroke-width="3.5" stroke-linejoin="miter"/><path d="M842.64,2224.74 A159.5,159.5 0 0 1 928.96,2016.34 L950.01,2067.15 A104.5,104.5 0 0 0 893.45,2203.69 Z" fill="#ff4d5e" stroke="#fff" stroke-width="3.5" stroke-linejoin="miter"/><path d="M928.96,2016.34 A159.5,159.5 0 0 1 990.00,2004.20 L990.00,2059.20 A104.5,104.5 0 0 0 950.01,2067.15 Z" fill="#3787d2" stroke="#fff" stroke-width="3.5" stroke-linejoin="miter"/></svg>
<div style="position:absolute;left:1191.8px;top:2055.7px;width:24.0px;height:24.0px;background:#9aa6fb;"></div>
<div class="t" style="left:1228.8px;top:2055.6px;font-size:24.2px;line-height:24.2px;font-weight:400;color:#1e1e1e;">Under 18 (43.75%)</div>
<div style="position:absolute;left:1191.8px;top:2103.7px;width:24.0px;height:24.0px;background:#27d193;"></div>
<div class="t" style="left:1228.8px;top:2103.6px;font-size:24.2px;line-height:24.2px;font-weight:400;color:#1e1e1e;">18-24 (6.25%)</div>
<div style="position:absolute;left:1191.8px;top:2151.7px;width:24.0px;height:24.0px;background:#fdc01c;"></div>
<div class="t" style="left:1228.8px;top:2151.6px;font-size:24.2px;line-height:24.2px;font-weight:400;color:#1e1e1e;">25-39 (18.75%)</div>
<div style="position:absolute;left:1191.8px;top:2199.7px;width:24.0px;height:24.0px;background:#ff4d5e;"></div>
<div class="t" style="left:1228.8px;top:2199.6px;font-size:24.2px;line-height:24.2px;font-weight:400;color:#1e1e1e;">40-60 (25%)</div>
<div style="position:absolute;left:1191.8px;top:2247.7px;width:24.0px;height:24.0px;background:#3787d2;"></div>
<div class="t" style="left:1228.8px;top:2247.6px;font-size:24.2px;line-height:24.2px;font-weight:400;color:#1e1e1e;">60+ (6.25%)</div>
<div class="t" style="left:1655.6px;top:2380.1px;font-size:28.5px;line-height:28.5px;font-weight:400;color:#3465f4;letter-spacing:0.12px;">Full Results Summary</div>
<svg style="position:absolute;left:1968.0px;top:2382.0px;" width="36" height="24" viewBox="0 0 36 24"><path d="M4 12 H31 M24.5 5.5 L31 12 L24.5 18.5" fill="none" stroke="#3465f4" stroke-width="2.2" stroke-linecap="round" stroke-linejoin="round"/></svg>
<div style="position:absolute;left:2092.0px;top:1816.0px;width:1268.3px;height:640.5px;box-sizing:border-box;border:2px solid #d8d8d8;border-radius:14px;background:#fff;"></div>
<div style="position:absolute;left:2093.0px;top:1929.8px;width:1266.3px;height:2.2px;background:#d8d8d8;"></div>
<div class="t" style="left:2127.0px;top:1861.1px;font-size:28px;line-height:28px;font-weight:700;color:#1f1f1f;letter-spacing:-0.1px;">I am a:</div>
<svg style="position:absolute;left:0.0px;top:0.0px;" width="3676" height="2468" viewBox="0 0 3676 2468"><path d="M2306.00,2004.20 A159.5,159.5 0 0 1 2465.05,2151.79 L2410.21,2155.89 A104.5,104.5 0 0 0 2306.00,2059.20 Z" fill="#9aa6fb" stroke="#fff" stroke-width="3.5" stroke-linejoin="miter"/><path d="M2465.05,2151.79 A159.5,159.5 0 0 1 2282.24,2321.42 L2290.43,2267.03 A104.5,104.5 0 0 0 2410.21,2155.89 Z" fill="#27d193" stroke="#fff" stroke-width="3.5" stroke-linejoin="miter"/><path d="M2282.24,2321.42 A159.5,159.5 0 0 1 2146.95,2151.79 L2201.79,2155.89 A104.5,104.5 0 0 0 2290.43,2267.03 Z" fill="#fdc01c" stroke="#fff" stroke-width="3.5" stroke-linejoin="miter"/><path d="M2146.95,2151.79 A159.5,159.5 0 0 1 2157.52,2105.45 L2208.72,2125.54 A104.5,104.5 0 0 0 2201.79,2155.89 Z" fill="#ff4d5e" stroke="#fff" stroke-width="3.5" stroke-linejoin="miter"/><path d="M2157.52,2105.45 A159.5,159.5 0 0 1 2306.00,2004.20 L2306.00,2059.20 A104.5,104.5 0 0 0 2208.72,2125.54 Z" fill="#3787d2" stroke="#fff" stroke-width="3.5" stroke-linejoin="miter"/></svg>
<div style="position:absolute;left:2507.8px;top:2055.7px;width:24.0px;height:24.0px;background:#9aa6fb;"></div>
<div class="t" style="left:2544.8px;top:2055.6px;font-size:24.2px;line-height:24.2px;font-weight:400;color:#1e1e1e;">Renter (23.81%)</div>
<div style="position:absolute;left:2507.8px;top:2103.7px;width:24.0px;height:24.0px;background:#27d193;"></div>
<div class="t" style="left:2544.8px;top:2103.6px;font-size:24.2px;line-height:24.2px;font-weight:400;color:#1e1e1e;">Homeowner (28.57%)</div>
<div style="position:absolute;left:2507.8px;top:2151.7px;width:24.0px;height:24.0px;background:#fdc01c;"></div>
<div class="t" style="left:2544.8px;top:2151.6px;font-size:24.2px;line-height:24.2px;font-weight:400;color:#1e1e1e;">Business owner (23.81%)</div>
<div style="position:absolute;left:2507.8px;top:2199.7px;width:24.0px;height:24.0px;background:#ff4d5e;"></div>
<div class="t" style="left:2544.8px;top:2199.6px;font-size:24.2px;line-height:24.2px;font-weight:400;color:#1e1e1e;">Student (4.76%)</div>
<div style="position:absolute;left:2507.8px;top:2247.7px;width:24.0px;height:24.0px;background:#3787d2;"></div>
<div class="t" style="left:2544.8px;top:2247.6px;font-size:24.2px;line-height:24.2px;font-weight:400;color:#1e1e1e;">Other (please specify) (19.05%)</div>
<div class="t" style="left:2971.6px;top:2380.1px;font-size:28.5px;line-height:28.5px;font-weight:400;color:#3465f4;letter-spacing:0.12px;">Full Results Summary</div>
<svg style="position:absolute;left:3284.0px;top:2382.0px;" width="36" height="24" viewBox="0 0 36 24"><path d="M4 12 H31 M24.5 5.5 L31 12 L24.5 18.5" fill="none" stroke="#3465f4" stroke-width="2.2" stroke-linecap="round" stroke-linejoin="round"/></svg>
<div style="position:absolute;left:2986.0px;top:142.3px;width:633.6px;height:421.0px;background:#fff;border-radius:2px;box-shadow:0 8px 28px rgba(0,0,0,0.13), 0 1px 4px rgba(0,0,0,0.05);"></div>
<svg style="position:absolute;left:3026.0px;top:162.0px;" width="32" height="34" viewBox="0 0 32 34"><rect x="2.5" y="4.3" width="27" height="27.3" rx="3.5" fill="none" stroke="#222" stroke-width="1.9" stroke-linecap="round" stroke-linejoin="round"/><rect x="10.2" y="2.2" width="12.8" height="5" rx="2" fill="#fff" stroke="#222" stroke-width="1.9"/><circle cx="12" cy="15.8" r="3" fill="none" stroke="#222" stroke-width="1.9" stroke-linecap="round" stroke-linejoin="round"/><path d="M18.5 12.9 H23.8 M18.5 19 H23.8 M8 24.8 H23.8" fill="none" stroke="#222" stroke-width="1.9"/></svg>
<div class="t" style="left:3081.0px;top:164.7px;font-size:28px;line-height:28px;font-weight:400;color:#222;letter-spacing:0.5px;">Build a PDF report</div>
<svg style="position:absolute;left:3024.0px;top:232.0px;" width="36" height="36" viewBox="0 0 36 36"><rect x="2.85" y="2.85" width="30.2" height="6.1" rx="2" fill="none" stroke="#222" stroke-width="1.9" stroke-linecap="round" stroke-linejoin="round"/><rect x="2.85" y="14.95" width="30.2" height="6.1" rx="2" fill="none" stroke="#222" stroke-width="1.9" stroke-linecap="round" stroke-linejoin="round"/><rect x="2.85" y="26.85" width="30.2" height="6.1" rx="2" fill="none" stroke="#222" stroke-width="1.9" stroke-linecap="round" stroke-linejoin="round"/></svg>
<div class="t" style="left:3081.0px;top:236.0px;font-size:28px;line-height:28px;font-weight:400;color:#222;letter-spacing:0.5px;">Results Summaries</div>
<div style="position:absolute;left:3018.0px;top:301.5px;width:570.0px;height:2.5px;background:#d4d4d4;"></div>
<svg style="position:absolute;left:3024.0px;top:341.0px;" width="36" height="36" viewBox="0 0 36 36"><rect x="3" y="3.5" width="30" height="22" rx="1" fill="none" stroke="#222" stroke-width="1.9" stroke-linecap="round" stroke-linejoin="round"/><path d="M3 19.5 H33 M18 25.5 V31.5 M11 31.5 H25" fill="none" stroke="#222" stroke-width="1.9" stroke-linecap="round" stroke-linejoin="round"/></svg>
<div class="t" style="left:3072.5px;top:338.8px;font-size:28px;line-height:28px;font-weight:400;color:#222;letter-spacing:0.5px;">Create Results Summary...</div>
<div style="position:absolute;left:3018.0px;top:401.5px;width:570.0px;height:2.5px;background:#d4d4d4;"></div>
<svg style="position:absolute;left:3026.0px;top:440.4px;" width="32" height="32" viewBox="0 0 32 32"><path d="M4 18 V27.5 H28 V18 M16 4 V21 M9.5 10.5 L16 4 L22.5 10.5" fill="none" stroke="#222" stroke-width="1.9" stroke-linecap="round" stroke-linejoin="round"/></svg>
<svg style="position:absolute;left:3026.0px;top:512.2px;" width="32" height="32" viewBox="0 0 32 32"><path d="M4 18 V27.5 H28 V18 M16 4 V21 M9.5 10.5 L16 4 L22.5 10.5" fill="none" stroke="#222" stroke-width="1.9" stroke-linecap="round" stroke-linejoin="round"/></svg>
<div class="t" style="left:3081.0px;top:441.9px;font-size:28px;line-height:28px;font-weight:400;color:#222;letter-spacing:0.55px;">Export Responses as CSV</div>
<div class="t" style="left:3081.0px;top:513.7px;font-size:28px;line-height:28px;font-weight:400;color:#222;letter-spacing:0.55px;">Export Translated Responses as CSV</div>
</body></html>
